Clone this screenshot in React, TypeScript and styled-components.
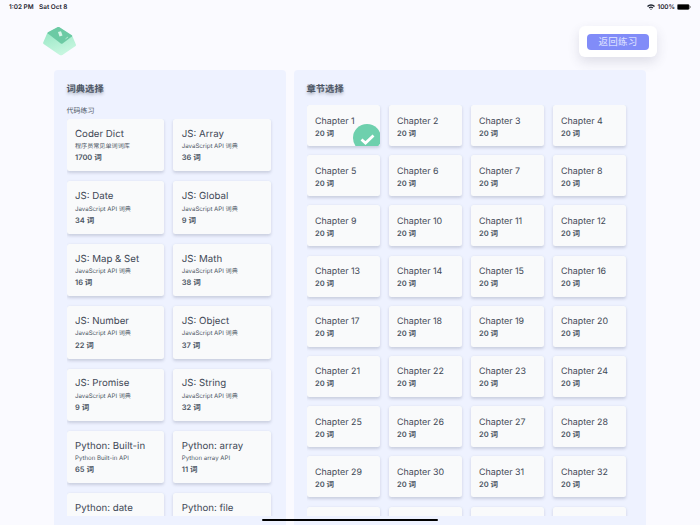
import styled, { createGlobalStyle } from "styled-components";

const GlobalStyle = createGlobalStyle`
  html, body {
    margin: 0;
    padding: 0;
    height: 525px;
    overflow: hidden;
    background: #fafaff;
    font-family: Inter, "Noto Sans CJK SC", sans-serif;
    color: #374151;
    text-rendering: geometricPrecision;
  }
  * { box-sizing: border-box; }
`;

const dicts = [
  { name: "Coder Dict", desc: "程序员常见单词词库", count: 1700 },
  { name: "JS: Array", desc: "JavaScript API 词典", count: 36 },
  { name: "JS: Date", desc: "JavaScript API 词典", count: 34 },
  { name: "JS: Global", desc: "JavaScript API 词典", count: 9 },
  { name: "JS: Map & Set", desc: "JavaScript API 词典", count: 16 },
  { name: "JS: Math", desc: "JavaScript API 词典", count: 38 },
  { name: "JS: Number", desc: "JavaScript API 词典", count: 22 },
  { name: "JS: Object", desc: "JavaScript API 词典", count: 37 },
  { name: "JS: Promise", desc: "JavaScript API 词典", count: 9 },
  { name: "JS: String", desc: "JavaScript API 词典", count: 32 },
  { name: "Python: Built-in", desc: "Python Built-in API", count: 65 },
  { name: "Python: array", desc: "Python array API", count: 11 },
  { name: "Python: date", desc: "Python date API", count: 8 },
  { name: "Python: file", desc: "Python file API", count: 12 },
];

const chapters = Array.from({ length: 36 }, (_, i) => i + 1);

const Page = styled.div`
  width: 700px;
  height: 525px;
  overflow: hidden;
  position: relative;
  background: #fafaff;
`;

const StatusBar = styled.div`
  height: 14px;
  padding: 0 9px 0 9px;
  display: flex;
  align-items: center;
  justify-content: space-between;
  font-size: 6.4px;
  font-weight: 600;
  color: #1f2430;
`;

const StatusLeft = styled.div`
  display: flex;
  gap: 5.5px;
`;

const StatusRight = styled.div`
  display: flex;
  align-items: center;
  gap: 2px;
`;

const Header = styled.header`
  height: 56px;
  padding: 12px 43px 0 43px;
  display: flex;
  justify-content: space-between;
  align-items: flex-start;
`;

const Logo = styled.svg`
  width: 34px;
  height: 30px;
`;

const BackCard = styled.div`
  width: 78px;
  height: 31px;
  background: #ffffff;
  border-radius: 6px;
  box-shadow: 0 5px 12px rgba(60, 60, 90, 0.14);
  display: flex;
  align-items: center;
  justify-content: center;
`;

const BackButton = styled.button`
  width: 62px;
  height: 16px;
  padding: 0 0 1px;
  border: none;
  border-radius: 4px;
  background: #818cf8;
  color: #d5daff;
  font-family: inherit;
  font-size: 9.5px;
  font-weight: 500;
  letter-spacing: 0.2px;
`;

const Main = styled.main`
  height: 455px;
  padding-left: 54px;
  display: flex;
  gap: 8.5px;
`;

const Panel = styled.section<{ $w: number }>`
  width: ${(p) => p.$w}px;
  height: 100%;
  background: #eef2ff;
  border-radius: 4px 4px 0 0;
  display: flex;
  flex-direction: column;
  padding: 13px 0 9px 12.5px;
  overflow: hidden;
`;

const PanelTitle = styled.h2`
  margin: 0;
  height: 13px;
  line-height: 13px;
  font-size: 9.3px;
  font-weight: 600;
  color: #4b5563;
  text-shadow: 0 2px 3px rgba(75, 85, 99, 0.4);
`;

const GroupLabel = styled.div`
  margin-top: 8.5px;
  height: 14.5px;
  line-height: 12px;
  font-size: 7px;
  color: #4b5563;
`;

const Scroller = styled.div<{ $top?: number }>`
  flex: 1;
  min-height: 0;
  overflow: hidden;
  margin-top: ${(p) => p.$top ?? 0}px;
`;

const DictGrid = styled.div`
  display: grid;
  grid-template-columns: 97.3px 97.3px;
  column-gap: 9.5px;
  row-gap: 10px;
  grid-auto-rows: 52.4px;
`;

const ChapterGrid = styled.div`
  display: grid;
  grid-template-columns: repeat(4, 73px);
  column-gap: 9px;
  row-gap: 9.2px;
  grid-auto-rows: 41px;
`;

const Card = styled.div`
  position: relative;
  overflow: hidden;
  background: #f9fafb;
  border-radius: 2.5px;
  box-shadow: 0 1.5px 3px rgba(60, 70, 100, 0.2);
`;

const DictCard = styled(Card)`
  padding: 8.8px 8.5px 0;
`;

const ChapterCard = styled(Card)`
  padding: 9.5px 8.5px 0;
`;

const CardName = styled.div<{ $size: number }>`
  font-size: ${(p) => p.$size}px;
  line-height: 13px;
  color: #3f4856;
  white-space: nowrap;
`;

const CardDesc = styled.div`
  margin-top: 1.5px;
  font-size: 6.1px;
  line-height: 9px;
  color: #4b5563;
  white-space: nowrap;
`;

const CardCount = styled.div<{ $top: number }>`
  margin-top: ${(p) => p.$top}px;
  font-size: 7.5px;
  line-height: 10px;
  font-weight: 600;
  color: #4b5563;
  white-space: nowrap;
`;

const Done = styled.div`
  position: absolute;
  right: -1.5px;
  bottom: -5.5px;
  width: 28px;
  height: 28px;
  border-radius: 50%;
  background: #6ed0ad;
`;

const Tick = styled.svg`
  position: absolute;
  left: 7px;
  top: 10px;
  width: 15px;
  height: 11px;
`;

const HomeBar = styled.div`
  position: absolute;
  left: 262px;
  bottom: 4px;
  width: 176px;
  height: 2.5px;
  border-radius: 2px;
  background: #000;
`;

export default function App() {
  return (
    <Page>
      <GlobalStyle />
      <StatusBar>
        <StatusLeft>
          <span>1:02 PM</span>
          <span>Sat Oct 8</span>
        </StatusLeft>
        <StatusRight>
          <svg width="8" height="6" viewBox="0 0 8 6">
            <path d="M0 2 A5.6 5.6 0 0 1 8 2 L7 3 A4.2 4.2 0 0 0 1 3 Z" fill="#1f2430" />
            <path d="M1.7 3.6 A3.3 3.3 0 0 1 6.3 3.6 L5.4 4.5 A2 2 0 0 0 2.6 4.5 Z" fill="#1f2430" />
            <path d="M3.2 5.1 A1.1 1.1 0 0 1 4.8 5.1 L4 6 Z" fill="#1f2430" />
          </svg>
          <span>100%</span>
          <svg width="14" height="6" viewBox="0 0 14 6">
            <rect x="0.3" y="0.3" width="12" height="5.4" rx="1.4" fill="#000" stroke="#777" strokeWidth="0.5" />
            <rect x="12.8" y="2" width="0.9" height="2" rx="0.4" fill="#777" />
          </svg>
        </StatusRight>
      </StatusBar>
      <Header>
        <Logo viewBox="0 0 34 30">
          <defs>
            <linearGradient id="keySide" x1="0" y1="0" x2="0.4" y2="1">
              <stop offset="0" stopColor="#8ee4c0" />
              <stop offset="1" stopColor="#c6f6df" />
            </linearGradient>
          </defs>
          <path d="M4.3 7 L0.2 16.6 Q-0.1 17.4 0.6 17.9 L16.6 28.9 Q18 29.7 19.4 28.9 L32.6 20 Q33.3 19.4 33 18.7 L29.3 10 L15.7 1 Z" fill="url(#keySide)" />
          <path d="M4.9 6.2 L14.8 1.1 Q15.7 0.7 16.5 1.2 L28.9 9.3 Q29.6 9.9 28.9 10.5 L19.6 17.4 Q18.7 18 17.8 17.4 L4.8 7.6 Q4.2 6.9 4.9 6.2 Z" fill="#6ccaa4" />
          <path d="M15 6 L18 5.2 L19.5 9.5 L16.5 10.5 Z" fill="#d8f5e8" />
          <path d="M22.5 12.8 L25 11" stroke="#c8efdc" strokeWidth="0.8" />
        </Logo>
        <BackCard>
          <BackButton>返回练习</BackButton>
        </BackCard>
      </Header>
      <Main>
        <Panel $w={231.5}>
          <PanelTitle>词典选择</PanelTitle>
          <GroupLabel>代码练习</GroupLabel>
          <Scroller>
            <DictGrid>
              {dicts.map((d) => (
                <DictCard key={d.name}>
                  <CardName $size={9.7}>{d.name}</CardName>
                  <CardDesc>{d.desc}</CardDesc>
                  <CardCount $top={2.2}>{d.count} 词</CardCount>
                </DictCard>
              ))}
            </DictGrid>
          </Scroller>
        </Panel>
        <Panel $w={352}>
          <PanelTitle>章节选择</PanelTitle>
          <Scroller $top={9}>
            <ChapterGrid>
              {chapters.map((n) => (
                <ChapterCard key={n}>
                  <CardName $size={8.9}>Chapter {n}</CardName>
                  <CardCount $top={1}>20 词</CardCount>
                  {n === 1 && (
                    <Done>
                      <Tick viewBox="0 0 15 11">
                        <path d="M1.5 5.5 L5.5 9 L13.5 1.5" fill="none" stroke="#fff" strokeWidth="2.8" />
                      </Tick>
                    </Done>
                  )}
                </ChapterCard>
              ))}
            </ChapterGrid>
          </Scroller>
        </Panel>
      </Main>
      <HomeBar />
    </Page>
  );
}
